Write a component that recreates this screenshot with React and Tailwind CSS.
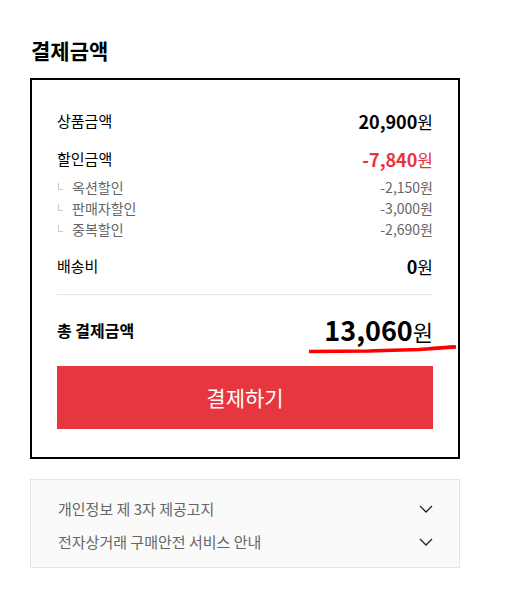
const font = { fontFamily: '"Noto Sans CJK KR", "Noto Sans", sans-serif' };

const subs = [
  { label: '옥션할인', value: '-2,150' },
  { label: '판매자할인', value: '-3,000' },
  { label: '중복할인', value: '-2,690' },
];

const Row = ({ label, value, red }) => (
  <div className="flex h-[24px] items-center justify-between">
    <span className="text-[15px] text-[#000]">{label}</span>
    <span className={`text-[17px] ${red ? 'text-[#e8333d]' : 'text-[#000]'}`}>
      <b className="text-[18px] font-bold">{value}</b>원
    </span>
  </div>
);

const Chevron = () => (
  <svg width="14" height="8" viewBox="0 0 14 8" className="mr-[1px]">
    <polyline points="1,1 7,7 13,1" fill="none" stroke="#222" strokeWidth="1.3" />
  </svg>
);

export default function App() {
  return (
    <div className="min-h-[594px] w-[524px] bg-white pl-[30px] pt-[34px]" style={font}>
      <h2 className="pl-[1px] text-[21px] font-bold leading-[32px] text-[#000]">결제금액</h2>

      {/* summary box */}
      <div className="relative mt-[12px] w-[430px] border-2 border-black px-[25px] pb-[28px] pt-[29px]">
        <Row label="상품금액" value="20,900" />
        <div className="mt-[14px]">
          <Row label="할인금액" value="-7,840" red />
        </div>
        <div className="mt-[6px]">
          {subs.map(s => (
            <div key={s.label} className="flex h-[21px] items-center justify-between text-[14px] text-[#666]">
              <span className="flex items-center">
                <span className="mb-[3px] ml-[1px] mr-[9px] h-[7px] w-[5px] border-b border-l border-[#ccc]" />
                {s.label}
              </span>
              <span>{s.value}원</span>
            </div>
          ))}
        </div>
        <div className="mt-[14px]">
          <Row label="배송비" value="0" />
        </div>
        <div className="mt-[16px] h-px bg-[#e5e5e5]" />
        <div className="mt-[15px] flex h-[40px] items-center justify-between">
          <span className="text-[16px] font-bold text-[#000]">총 결제금액</span>
          <span className="text-[22px] text-[#000]">
            <b className="text-[27px] font-bold">13,060</b>원
          </span>
        </div>
        {/* hand-drawn red underline */}
        <svg className="absolute left-[277px] top-[264px]" width="147" height="10" viewBox="0 0 147 10">
          <path d="M1 7.5 L60 7 L75 6.5 L110 5.5 L146 3" stroke="#ff0000" strokeWidth="3.6" fill="none" strokeLinecap="square" />
          <path d="M120 4.5 L146 2.5" stroke="#ff0000" strokeWidth="3" fill="none" />
        </svg>
        <button className="mt-[16px] flex h-[63px] w-full items-center justify-center bg-[#e63740] text-[21px] text-white">
          결제하기
        </button>
      </div>

      {/* notices */}
      <div className="mt-[20px] w-[430px] border border-[#e5e5e5] bg-[#fafafa] pb-[13px] pl-[27px] pr-[25px] pt-[17px]">
        {['개인정보 제 3자 제공고지', '전자상거래 구매안전 서비스 안내'].map((t, i) => (
          <div key={t} className={`flex h-[24px] items-center justify-between ${i ? 'mt-[9px]' : ''}`}>
            <span className="text-[15px] text-[#666]">{t}</span>
            <Chevron />
          </div>
        ))}
      </div>
    </div>
  );
}
